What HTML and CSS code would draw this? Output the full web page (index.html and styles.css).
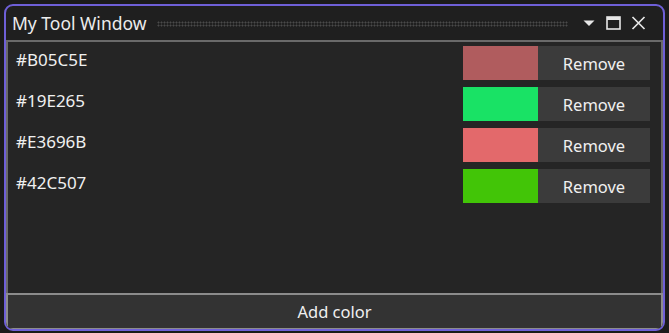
FILE: index.html
```html
<!DOCTYPE html>
<html lang="en">
    <head>
        <meta charset="utf-8">
        <title>My Tool Window</title>
        <link rel="stylesheet" href="styles.css">
    </head>
    <body>
        <div class="window"> <!-- the tool window frame. -->
            <header class="titlebar">
                <span class="title">My Tool Window</span>
                <span class="grip"></span> <!-- dotted drag handle. -->
                <span class="title-btn">
                    <svg width="12" height="7" viewBox="0 0 12 7"><path d="M0.5 0.5 H11.5 L6 6 Z" fill="#e6e6e6"/></svg>
                </span>
                <span class="title-btn">
                    <svg width="15" height="14" viewBox="0 0 15 14"><rect x="1" y="1" width="13" height="12" fill="none" stroke="#e6e6e6" stroke-width="1.6"/><rect x="1" y="1" width="13" height="3" fill="#e6e6e6"/></svg>
                </span>
                <span class="title-btn">
                    <svg width="15" height="14" viewBox="0 0 15 14"><path d="M1.5 1 L13.5 13 M13.5 1 L1.5 13" stroke="#e6e6e6" stroke-width="1.7"/></svg>
                </span>
            </header>
            <main class="content">
                <div class="color-row">
                    <span class="hex">#B05C5E</span>
                    <span class="swatch" style="background:#B05C5E"></span>
                    <button class="remove">Remove</button>
                </div>
                <div class="color-row">
                    <span class="hex">#19E265</span>
                    <span class="swatch" style="background:#19E265"></span>
                    <button class="remove">Remove</button>
                </div>
                <div class="color-row">
                    <span class="hex">#E3696B</span>
                    <span class="swatch" style="background:#E3696B"></span>
                    <button class="remove">Remove</button>
                </div>
                <div class="color-row">
                    <span class="hex">#42C507</span>
                    <span class="swatch" style="background:#42C507"></span>
                    <button class="remove">Remove</button>
                </div>
            </main>
            <button class="add">Add color</button>
        </div>
    </body>
</html>
```

FILE: styles.css
```css
*{
    margin: 0;
    padding: 0;
    box-sizing: border-box;
}
body{
    background-color: #1b1b1b;
    font-family: "Noto Sans", "Open Sans", sans-serif;
    color: #f0f0f0;
}
.window{
    margin: 4px;
    width: 661px;
    height: 327px;
    border: 2px solid #6e5fd7;
    border-radius: 9px;
    background-color: #1f1f1f;
    display: flex;
    flex-direction: column;
    overflow: hidden;
}
.titlebar{
    height: 34px;
    display: flex;
    align-items: center;
    padding-left: 6px;
    padding-right: 12px;
}
.title{
    font-size: 17.5px;
    color: #ececec;
    padding-bottom: 1px;
}
.grip{
    flex: 1;
    height: 6px;
    margin: 1px 8px 0 11px;
    background-image: radial-gradient(#4a4a4a 0.9px, transparent 1.1px);
    background-size: 3px 3px;
}
.title-btn{
    width: 25px;
    height: 20px;
    display: flex;
    align-items: center;
    justify-content: center;
}
.content{
    flex: 1;
    background-color: #252525;
    border: 2px solid #6a6a6a;
    border-bottom: none;
    padding: 4px 11px 0 8px;
    display: flex;
    flex-direction: column;
    gap: 7px;
}
.color-row{
    display: flex;
    height: 34px;
}
.hex{
    flex: 1;
    font-size: 17px;
    line-height: 22px;
    padding-top: 3px;
}
.swatch{
    width: 75px;
}
.remove{
    width: 112px;
    border: none;
    background-color: #3b3b3b;
    color: #f0f0f0;
    font-family: inherit;
    font-size: 16.5px;
}
.add{
    height: 36px;
    border: 2px solid #8c8c8c;
    border-bottom-width: 1px;
    background-color: #333333;
    color: #f0f0f0;
    font-family: inherit;
    font-size: 16.5px;
}
```
